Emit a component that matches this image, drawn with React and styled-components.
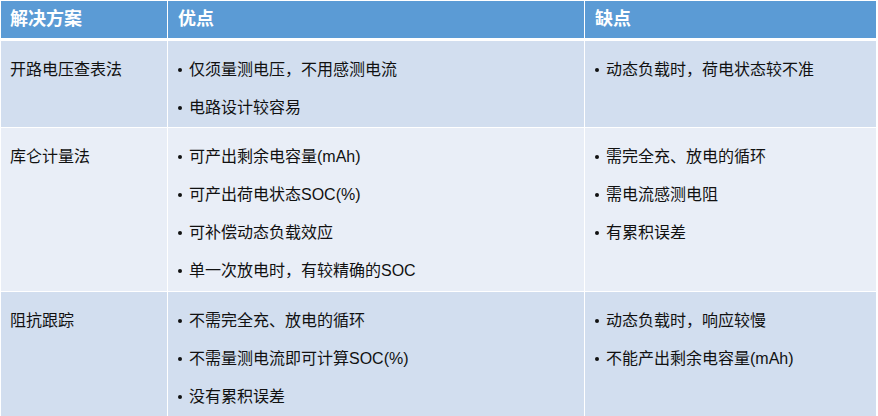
import React from "react"
import styled, { createGlobalStyle } from "styled-components"

const GlobalStyle = createGlobalStyle`
  html, body {
    margin: 0;
    padding: 0;
    background: #ffffff;
  }
  body {
    font-family: "Liberation Sans", "Noto Sans CJK SC", sans-serif;
    color: #111111;
  }
`

const Table = styled.div`
  display: grid;
  grid-template-columns: 166px 416px 291px;
  column-gap: 1px;
  width: 876px;
  margin: 1px 0 0 1px;
  background: #ffffff;
`

const HeadCell = styled.div`
  height: 37px;
  margin-bottom: 3px;
  background: #5b9bd5;
  color: #ffffff;
  font-size: 18px;
  font-weight: 700;
  line-height: 37px;
  padding-left: ${(p) => (p.first ? "9px" : "10px")};
`

const Cell = styled.div`
  background: ${(p) => (p.shade === "light" ? "#e9eef7" : "#d2deef")};
  padding: 10px 0 0 ${(p) => (p.first ? "9px" : "10px")};
  margin-bottom: ${(p) => (p.last ? "0" : "1px")};
  min-height: ${(p) => p.minHeight || 0}px;
  font-size: 16px;
  line-height: 38px;
`

const List = styled.ul`
  list-style: none;
  margin: 0;
  padding: 0;
`

const Item = styled.li`
  display: flex;
  align-items: center;
  height: 38px;
  white-space: nowrap;
  &::before {
    content: "";
    width: 4px;
    height: 4px;
    border-radius: 50%;
    background: #111111;
    margin-right: 7px;
    flex: none;
  }
`

const rows = [
  {
    name: "开路电压查表法",
    shade: "dark",
    minHeight: 75,
    pros: ["仅须量测电压，不用感测电流", "电路设计较容易"],
    cons: ["动态负载时，荷电状态较不准"],
  },
  {
    name: "库仑计量法",
    shade: "light",
    minHeight: 153,
    pros: [
      "可产出剩余电容量(mAh)",
      "可产出荷电状态SOC(%)",
      "可补偿动态负载效应",
      "单一次放电时，有较精确的SOC",
    ],
    cons: ["需完全充、放电的循环", "需电流感测电阻", "有累积误差"],
  },
  {
    name: "阻抗跟踪",
    shade: "dark",
    minHeight: 124,
    last: true,
    pros: ["不需完全充、放电的循环", "不需量测电流即可计算SOC(%)", "没有累积误差"],
    cons: ["动态负载时，响应较慢", "不能产出剩余电容量(mAh)"],
  },
]

export default function App() {
  return (
    <>
      <GlobalStyle />
      <Table>
        <HeadCell first>解决方案</HeadCell>
        <HeadCell>优点</HeadCell>
        <HeadCell>缺点</HeadCell>
        {rows.map((row) => (
          <React.Fragment key={row.name}>
            <Cell first shade={row.shade} minHeight={row.minHeight} last={row.last}>
              {row.name}
            </Cell>
            <Cell shade={row.shade} minHeight={row.minHeight} last={row.last}>
              <List>
                {row.pros.map((t) => (
                  <Item key={t}>{t}</Item>
                ))}
              </List>
            </Cell>
            <Cell shade={row.shade} minHeight={row.minHeight} last={row.last}>
              <List>
                {row.cons.map((t) => (
                  <Item key={t}>{t}</Item>
                ))}
              </List>
            </Cell>
          </React.Fragment>
        ))}
      </Table>
    </>
  )
}
